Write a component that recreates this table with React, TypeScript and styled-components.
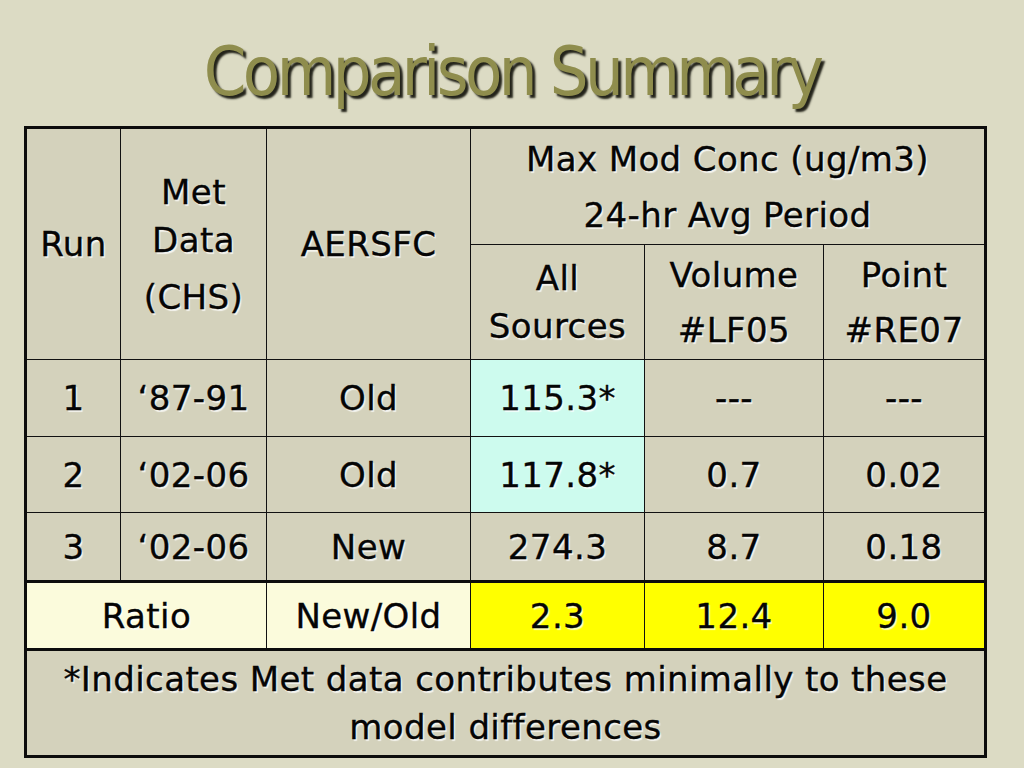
import React from "react";
import styled, { createGlobalStyle } from "styled-components";

const Global = createGlobalStyle`
  html, body { margin: 0; padding: 0; }
  body {
    width: 1024px;
    height: 768px;
    overflow: hidden;
    background: #dcdbc4;
  }
`;

const Slide = styled.div`
  width: 1024px;
  height: 768px;
  display: flex;
  flex-direction: column;
  background: #dcdbc4;
  font-family: "DejaVu Sans", "Verdana", sans-serif;
`;

const TitleBar = styled.h1`
  margin: 0;
  height: 126px;
  display: flex;
  align-items: flex-start;
  justify-content: center;
  padding-top: 38px;
  box-sizing: border-box;
  font-family: "DejaVu Sans Condensed", "DejaVu Sans", sans-serif;
  font-stretch: condensed;
  font-weight: normal;
  font-size: 68px;
  line-height: 1;
  letter-spacing: -3.6px;
  color: #8f8d4d;
  text-shadow: 3px 3px 2px #23231a;
`;

const TableWrap = styled.div`
  padding-left: 24px;
`;

const Grid = styled.table`
  width: 960px;
  table-layout: fixed;
  border-collapse: collapse;
  border: 3px solid #0c0c0c;
  font-size: 34px;
  letter-spacing: 0.4px;
  color: #050505;
`;

type CellProps = { $bg?: string; $thickBottom?: boolean };

const Cell = styled.td<CellProps>`
  border: 1px solid #111;
  ${(p) => (p.$thickBottom ? "border-bottom: 3px solid #0c0c0c;" : "")}
  background: ${(p) => p.$bg ?? "#d4d2bc"};
  text-align: center;
  vertical-align: middle;
  padding: 0 2px;
  line-height: 48px;
  -webkit-text-stroke: 0.35px #050505;
  text-shadow: 1.5px 1.5px 1px rgba(255, 255, 255, 0.75);
  white-space: nowrap;
`;

const Para = styled.div<{ $gap?: number }>`
  margin-top: ${(p) => p.$gap ?? 0}px;
`;

const Row = styled.tr<{ $h: number }>`
  height: ${(p) => p.$h}px;
`;

const CYAN = "#cdfbee";
const CREAM = "#fbfbdc";
const YELLOW = "#ffff00";

const dataRows = [
  { run: "1", met: "\u201887-91", sfc: "Old", all: "115.3*", vol: "---", pt: "---", hl: true, h: 77 },
  { run: "2", met: "\u201802-06", sfc: "Old", all: "117.8*", vol: "0.7", pt: "0.02", hl: true, h: 76 },
  { run: "3", met: "\u201802-06", sfc: "New", all: "274.3", vol: "8.7", pt: "0.18", hl: false, h: 69 },
];

export default function App() {
  return (
    <>
      <Global />
      <Slide>
        <TitleBar>Comparison Summary</TitleBar>
        <TableWrap>
          <Grid>
            <colgroup>
              <col style={{ width: 95 }} />
              <col style={{ width: 146 }} />
              <col style={{ width: 204 }} />
              <col style={{ width: 174 }} />
              <col style={{ width: 179 }} />
              <col style={{ width: 162 }} />
            </colgroup>
            <tbody>
              <Row $h={117}>
                <Cell rowSpan={2}>Run</Cell>
                <Cell rowSpan={2}>
                  <Para>Met</Para>
                  <Para>Data</Para>
                  <Para $gap={9}>(CHS)</Para>
                </Cell>
                <Cell rowSpan={2}>AERSFC</Cell>
                <Cell colSpan={3}>
                  <Para>Max Mod Conc (ug/m3)</Para>
                  <Para $gap={8}>24-hr Avg Period</Para>
                </Cell>
              </Row>
              <Row $h={115}>
                <Cell>
                  <Para>All</Para>
                  <Para>Sources</Para>
                </Cell>
                <Cell>
                  <Para>Volume</Para>
                  <Para $gap={7}>#LF05</Para>
                </Cell>
                <Cell>
                  <Para>Point</Para>
                  <Para $gap={7}>#RE07</Para>
                </Cell>
              </Row>
              {dataRows.map((r, i) => {
                const last = i === dataRows.length - 1;
                return (
                  <Row $h={r.h} key={r.run}>
                    <Cell $thickBottom={last}>{r.run}</Cell>
                    <Cell $thickBottom={last}>{r.met}</Cell>
                    <Cell $thickBottom={last}>{r.sfc}</Cell>
                    <Cell $thickBottom={last} $bg={r.hl ? CYAN : undefined}>{r.all}</Cell>
                    <Cell $thickBottom={last}>{r.vol}</Cell>
                    <Cell $thickBottom={last}>{r.pt}</Cell>
                  </Row>
                );
              })}
              <Row $h={68}>
                <Cell colSpan={2} $bg={CREAM} $thickBottom>Ratio</Cell>
                <Cell $bg={CREAM} $thickBottom>New/Old</Cell>
                <Cell $bg={YELLOW} $thickBottom>2.3</Cell>
                <Cell $bg={YELLOW} $thickBottom>12.4</Cell>
                <Cell $bg={YELLOW} $thickBottom>9.0</Cell>
              </Row>
              <Row $h={107}>
                <Cell colSpan={6}>
                  <Para>*Indicates Met data contributes minimally to these</Para>
                  <Para>model differences</Para>
                </Cell>
              </Row>
            </tbody>
          </Grid>
        </TableWrap>
      </Slide>
    </>
  );
}
